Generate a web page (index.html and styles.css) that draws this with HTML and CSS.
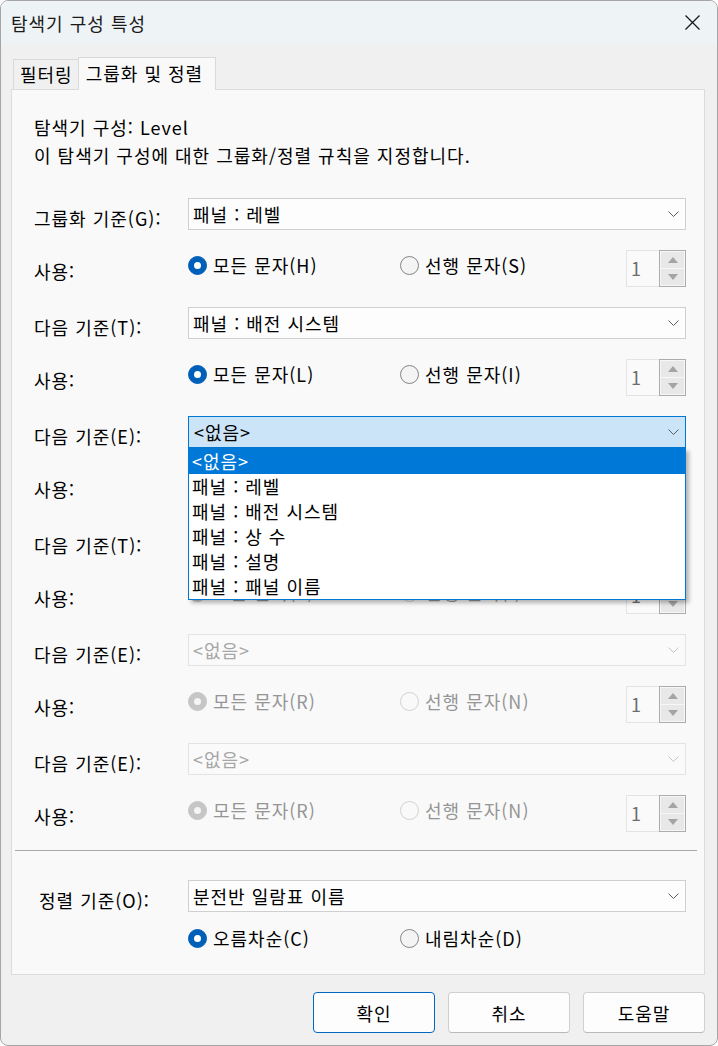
FILE: index.html
```html
<!DOCTYPE html>
<html lang="ko">
<head>
    <meta charset="UTF-8">
    <meta name="viewport" content="width=device-width, initial-scale=1.0">
    <title>탐색기 구성 특성</title>
    <link rel="stylesheet" href="styles.css">
</head>
<body>

    <div class="window">
        <!-- Title Bar -->
        <div class="titlebar">
            <span class="title">탐색기 구성 특성</span>
            <svg class="close" width="15" height="15" viewBox="0 0 15 15">
                <path d="M0.5 0.5 L14.5 14.5 M14.5 0.5 L0.5 14.5" stroke="#1a1a1a" stroke-width="1.3" fill="none"/>
            </svg>
        </div>

        <div class="main">
            <!-- Tabs -->
            <div class="tabs">
                <div class="tab">필터링</div>
                <div class="tab active">그룹화 및 정렬</div>
            </div>

            <div class="panel">
                <p class="info">탐색기 구성: Level<br>이 탐색기 구성에 대한 그룹화/정렬 규칙을 지정합니다.</p>

                <!-- Group 1 -->
                <div class="group">
                    <div class="field">
                        <span class="lbl">그룹화 기준(G):</span>
                        <div class="combo"><span>패널 : 레벨</span>
                            <svg class="chev" width="11" height="6" viewBox="0 0 11 6"><polyline points="0.5,0.5 5.5,5.5 10.5,0.5" fill="none" stroke="#5c5c5c" stroke-width="1"/></svg>
                        </div>
                    </div>
                    <div class="use">
                        <span class="lbl">사용:</span>
                        <div class="radios">
                            <div class="radio"><i class="dot on"></i>모든 문자(H)</div>
                            <div class="radio"><i class="dot"></i>선행 문자(S)</div>
                        </div>
                        <div class="spin">
                            <div class="spin-edit">1</div>
                            <div class="spin-btns"><div class="spin-btn"><i class="up"></i></div><div class="spin-btn"><i class="down"></i></div></div>
                        </div>
                    </div>
                </div>

                <!-- Group 2 -->
                <div class="group">
                    <div class="field">
                        <span class="lbl">다음 기준(T):</span>
                        <div class="combo"><span>패널 : 배전 시스템</span>
                            <svg class="chev" width="11" height="6" viewBox="0 0 11 6"><polyline points="0.5,0.5 5.5,5.5 10.5,0.5" fill="none" stroke="#5c5c5c" stroke-width="1"/></svg>
                        </div>
                    </div>
                    <div class="use">
                        <span class="lbl">사용:</span>
                        <div class="radios">
                            <div class="radio"><i class="dot on"></i>모든 문자(L)</div>
                            <div class="radio"><i class="dot"></i>선행 문자(I)</div>
                        </div>
                        <div class="spin">
                            <div class="spin-edit">1</div>
                            <div class="spin-btns"><div class="spin-btn"><i class="up"></i></div><div class="spin-btn"><i class="down"></i></div></div>
                        </div>
                    </div>
                </div>

                <!-- Group 3 (open dropdown) -->
                <div class="group">
                    <div class="field">
                        <span class="lbl">다음 기준(E):</span>
                        <div class="combo focus"><span>&lt;없음&gt;</span>
                            <svg class="chev" width="11" height="6" viewBox="0 0 11 6"><polyline points="0.5,0.5 5.5,5.5 10.5,0.5" fill="none" stroke="#5c5c5c" stroke-width="1"/></svg>
                            <ul class="list">
                                <li class="sel">&lt;없음&gt;</li>
                                <li>패널 : 레벨</li>
                                <li>패널 : 배전 시스템</li>
                                <li>패널 : 상 수</li>
                                <li>패널 : 설명</li>
                                <li>패널 : 패널 이름</li>
                            </ul>
                        </div>
                    </div>
                    <div class="use">
                        <span class="lbl">사용:</span>
                        <div class="radios">
                            <div class="radio"><i class="dot on"></i>모든 문자(R)</div>
                            <div class="radio"><i class="dot"></i>선행 문자(N)</div>
                        </div>
                        <div class="spin">
                            <div class="spin-edit">1</div>
                            <div class="spin-btns"><div class="spin-btn"><i class="up"></i></div><div class="spin-btn"><i class="down"></i></div></div>
                        </div>
                    </div>
                </div>

                <!-- Group 4 -->
                <div class="group disabled">
                    <div class="field">
                        <span class="lbl">다음 기준(T):</span>
                        <div class="combo"><span>&lt;없음&gt;</span>
                            <svg class="chev" width="11" height="6" viewBox="0 0 11 6"><polyline points="0.5,0.5 5.5,5.5 10.5,0.5" fill="none" stroke="#c4c4c4" stroke-width="1"/></svg>
                        </div>
                    </div>
                    <div class="use">
                        <span class="lbl">사용:</span>
                        <div class="radios">
                            <div class="radio"><i class="dot on"></i>모든 문자(L)</div>
                            <div class="radio"><i class="dot"></i>선행 문자(I)</div>
                        </div>
                        <div class="spin">
                            <div class="spin-edit">1</div>
                            <div class="spin-btns"><div class="spin-btn"><i class="up"></i></div><div class="spin-btn"><i class="down"></i></div></div>
                        </div>
                    </div>
                </div>

                <!-- Group 5 -->
                <div class="group disabled">
                    <div class="field">
                        <span class="lbl">다음 기준(E):</span>
                        <div class="combo"><span>&lt;없음&gt;</span>
                            <svg class="chev" width="11" height="6" viewBox="0 0 11 6"><polyline points="0.5,0.5 5.5,5.5 10.5,0.5" fill="none" stroke="#c4c4c4" stroke-width="1"/></svg>
                        </div>
                    </div>
                    <div class="use">
                        <span class="lbl">사용:</span>
                        <div class="radios">
                            <div class="radio"><i class="dot on"></i>모든 문자(R)</div>
                            <div class="radio"><i class="dot"></i>선행 문자(N)</div>
                        </div>
                        <div class="spin">
                            <div class="spin-edit">1</div>
                            <div class="spin-btns"><div class="spin-btn"><i class="up"></i></div><div class="spin-btn"><i class="down"></i></div></div>
                        </div>
                    </div>
                </div>

                <!-- Group 6 -->
                <div class="group disabled">
                    <div class="field">
                        <span class="lbl">다음 기준(E):</span>
                        <div class="combo"><span>&lt;없음&gt;</span>
                            <svg class="chev" width="11" height="6" viewBox="0 0 11 6"><polyline points="0.5,0.5 5.5,5.5 10.5,0.5" fill="none" stroke="#c4c4c4" stroke-width="1"/></svg>
                        </div>
                    </div>
                    <div class="use">
                        <span class="lbl">사용:</span>
                        <div class="radios">
                            <div class="radio"><i class="dot on"></i>모든 문자(R)</div>
                            <div class="radio"><i class="dot"></i>선행 문자(N)</div>
                        </div>
                        <div class="spin">
                            <div class="spin-edit">1</div>
                            <div class="spin-btns"><div class="spin-btn"><i class="up"></i></div><div class="spin-btn"><i class="down"></i></div></div>
                        </div>
                    </div>
                </div>

                <div class="sep"></div>

                <!-- Sort -->
                <div class="field sort">
                    <span class="lbl">정렬 기준(O):</span>
                    <div class="combo"><span>분전반 일람표 이름</span>
                        <svg class="chev" width="11" height="6" viewBox="0 0 11 6"><polyline points="0.5,0.5 5.5,5.5 10.5,0.5" fill="none" stroke="#5c5c5c" stroke-width="1"/></svg>
                    </div>
                </div>
                <div class="radios order">
                    <div class="radio"><i class="dot on"></i>오름차순(C)</div>
                    <div class="radio"><i class="dot"></i>내림차순(D)</div>
                </div>
            </div>
        </div>

        <!-- Dialog Buttons -->
        <div class="footer">
            <button class="btn default">확인</button>
            <button class="btn">취소</button>
            <button class="btn">도움말</button>
        </div>
    </div>

</body>
</html>
```

FILE: styles.css
```css
/* Reset */
* {
    margin: 0;
    padding: 0;
    box-sizing: border-box;
}

body {
    width: 718px;
    height: 1046px;
    background: #ffffff;
    font-family: "Noto Sans CJK KR", "Noto Sans", sans-serif;
    font-size: 18px;
    letter-spacing: 1px;
    color: #000;
}

/* Window frame */
.window {
    height: 1046px;
    border: 1px solid #a6a6a6;
    border-radius: 8px;
    background: #f0f0f0;
    overflow: hidden;
}

.titlebar {
    height: 43px;
    background: #eef3f6;
    display: flex;
    align-items: center;
    justify-content: space-between;
    padding: 0 17px 0 10px;
}

.title {
    line-height: 24px;
    color: #1a1a1a;
}

.close {
    display: block;
}

.main {
    padding: 13px 12px 0 10px;
}

/* Tabs */
.tabs {
    display: flex;
    align-items: flex-end;
    height: 32px;
    margin-left: 2px;
    position: relative;
    z-index: 1;
}

.tab {
    height: 30px;
    line-height: 28px;
    padding: 0 5px 0 6px;
    border: 1px solid #d9d9d9;
    border-bottom: none;
    background: #f0f0f0;
}

.tab.active {
    height: 33px;
    margin-bottom: -1px;
    line-height: 30px;
    padding: 0 12px 0 7px;
    background: #f9f9f9;
    margin-left: -1px;
}

/* Tab page */
.panel {
    background: #f9f9f9;
    border: 1px solid #dcdcdc;
    padding: 23px 18px 21px 22px;
    display: flex;
    flex-direction: column;
}

.info {
    line-height: 28px;
    margin-bottom: 29px;
}

.group {
    display: flex;
    flex-direction: column;
    gap: 20px;
}

.group + .group {
    margin-top: 20px;
}

.lbl {
    flex: 0 0 154px;
    white-space: nowrap;
}

.field {
    display: flex;
    align-items: flex-start;
    height: 32px;
}

.field .lbl {
    line-height: 32px;
    padding-top: 4px;
}

.use {
    display: flex;
    align-items: flex-start;
    height: 37px;
}

.use .lbl {
    line-height: 37px;
    padding-top: 3px;
}

/* Combo box */
.combo {
    flex: 1;
    height: 32px;
    border: 1px solid #cfcfcf;
    background: #fdfdfd;
    display: flex;
    align-items: center;
    padding: 0 6px 0 4px;
    line-height: 30px;
    position: relative;
}

.combo .chev {
    margin-left: auto;
}

.combo.focus {
    background: #cce4f7;
    border-color: #0078d4;
    padding-left: 5px;
}

.disabled .combo {
    border-color: #e3e3e3;
    background: #fafafa;
    color: #a6a6a6;
}

/* Open drop-down list */
.list {
    position: absolute;
    left: -1px;
    right: -1px;
    top: calc(100% + 1px);
    list-style: none;
    background: #ffffff;
    border: 1px solid #0078d4;
    box-shadow: 3px 3px 4px rgba(0, 0, 0, 0.28);
    z-index: 5;
}

.list li {
    height: 25px;
    line-height: 25px;
    padding-left: 3px;
    color: #000;
}

.list li.sel {
    background: #0078d7;
    color: #ffffff;
}

/* Radio buttons */
.radios {
    display: flex;
    align-items: center;
    height: 30px;
}

.radio {
    width: 212px;
    display: flex;
    align-items: center;
    gap: 6px;
    white-space: nowrap;
}

.dot {
    width: 19px;
    height: 19px;
    border-radius: 50%;
    border: 1px solid #858585;
    background: #f4f4f4;
    position: relative;
    flex: none;
}

.dot.on {
    border-color: #005fb8;
    background: #005fb8;
}

.dot.on::after {
    content: "";
    position: absolute;
    left: 5px;
    top: 5px;
    width: 7px;
    height: 7px;
    border-radius: 50%;
    background: #ffffff;
}

.disabled .radio {
    color: #959595;
}

.disabled .dot {
    border-color: #d2d2d2;
    background: #f9f9f9;
}

.disabled .dot.on {
    border-color: #c6c6c6;
    background: #c6c6c6;
}

.disabled .dot.on::after {
    background: #f5f5f5;
}

.order {
    margin-top: 11px;
    margin-left: 154px;
}

/* Spin control */
.spin {
    margin-left: auto;
    display: flex;
    width: 60px;
    height: 37px;
}

.spin-edit {
    width: 33px;
    border: 1px solid #e4e4e4;
    border-right: none;
    background: #fafafa;
    color: #6d6d6d;
    padding-left: 4px;
    line-height: 35px;
}

.spin-btns {
    width: 27px;
    border: 1px solid #acacac;
    display: flex;
    flex-direction: column;
    gap: 1px;
    padding: 1px;
    background: #f7f7f7;
}

.spin-btn {
    flex: 1;
    background: #e8e8e8;
    display: flex;
    align-items: center;
    justify-content: center;
}

.up {
    border-left: 5px solid transparent;
    border-right: 5px solid transparent;
    border-bottom: 6px solid #a4a4a4;
}

.down {
    border-left: 5px solid transparent;
    border-right: 5px solid transparent;
    border-top: 6px solid #a4a4a4;
}

/* Separator and sort section */
.sep {
    height: 1px;
    background: #a8a8a8;
    margin: 18px -11px 0 -19px;
}

.sort {
    margin-top: 29px;
}

.sort .lbl {
    padding-left: 5px;
}

/* Dialog buttons */
.footer {
    display: flex;
    justify-content: flex-end;
    gap: 13px;
    padding: 17px 12px 0 0;
}

.btn {
    width: 122px;
    height: 41px;
    background: #fdfdfd;
    border: 1px solid #d0d0d0;
    border-bottom-color: #b9b9b9;
    border-radius: 4px;
    font-family: "Noto Sans CJK KR", "Noto Sans", sans-serif;
    font-size: 18px;
    letter-spacing: 1px;
    color: #000;
}

.btn.default {
    border: 1px solid #0067c0;
}
```
